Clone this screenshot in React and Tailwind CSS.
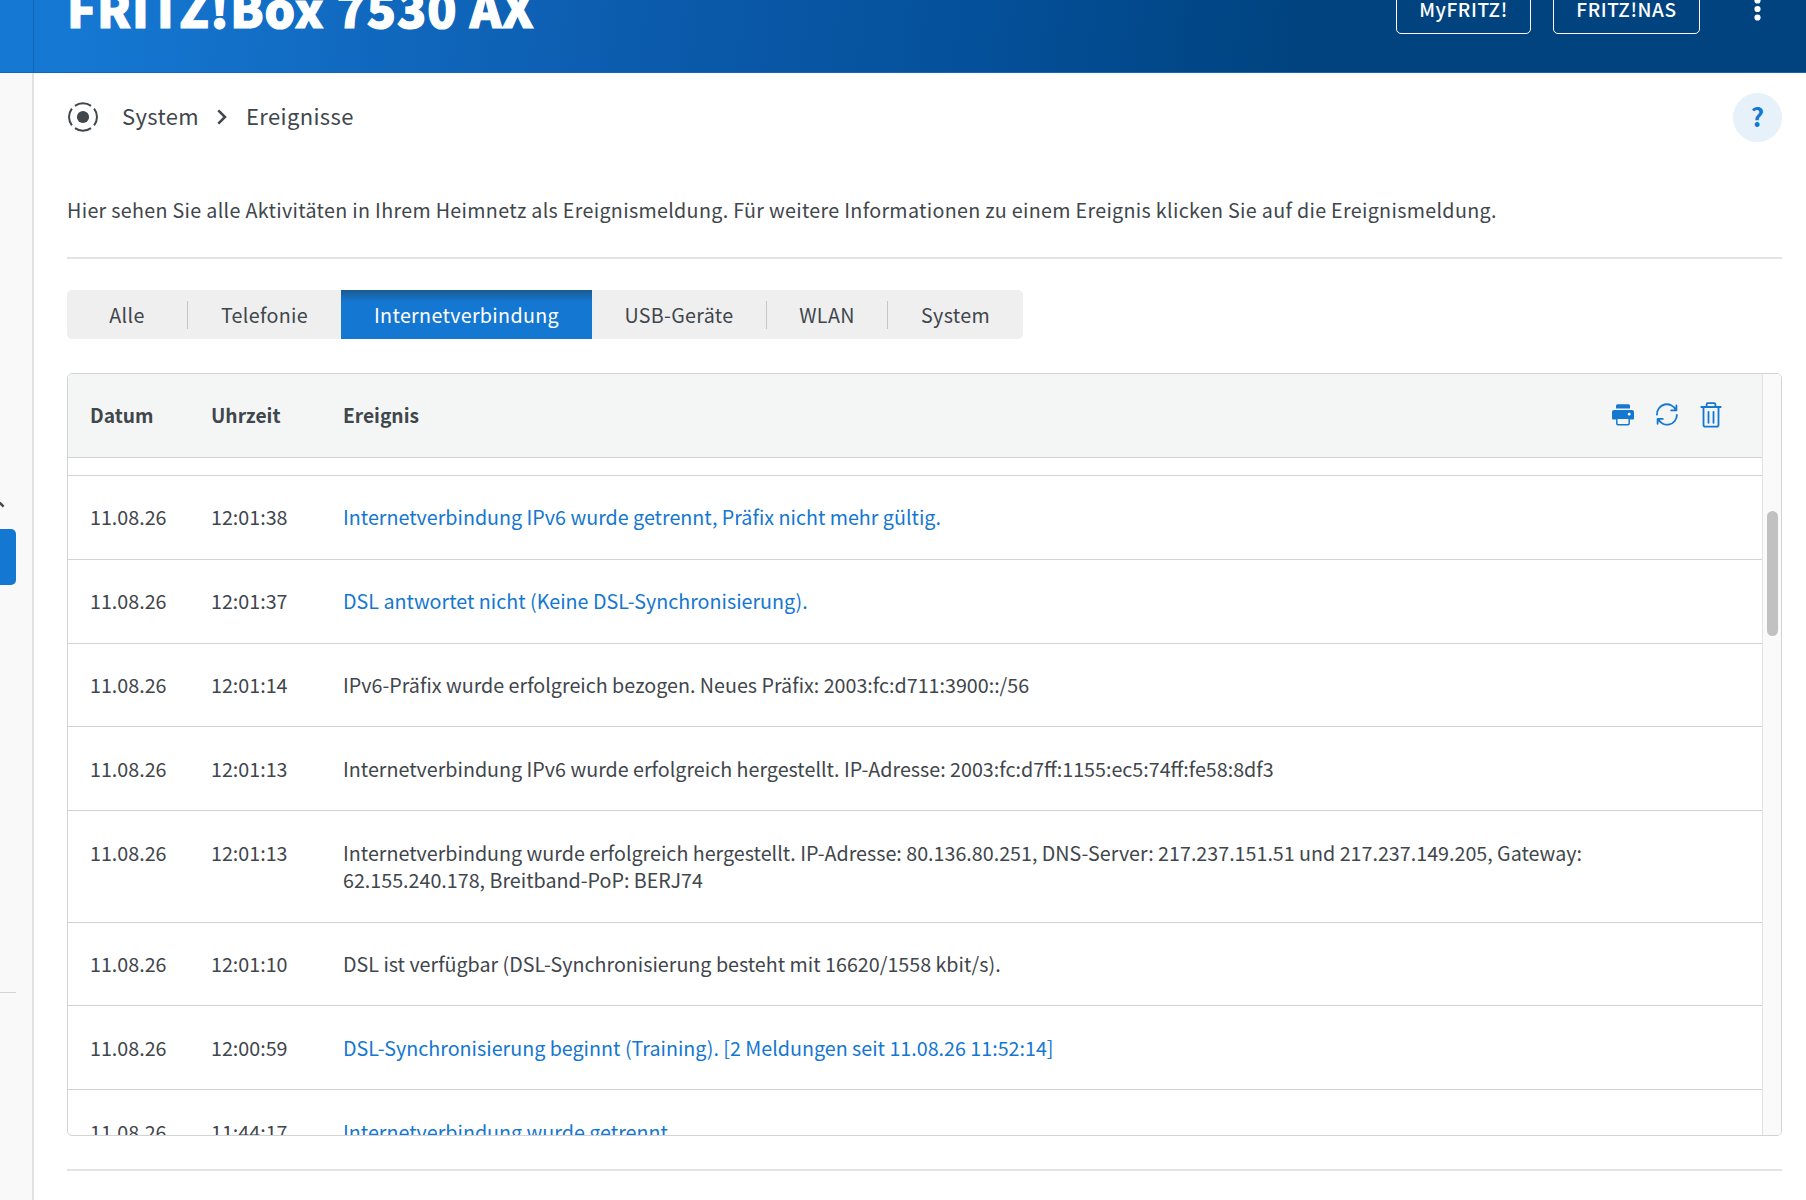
import React, { useState } from 'react';

const tabs = [
  { name: 'Alle', width: 'w-[121px]', divider: true },
  { name: 'Telefonie', width: 'w-[153px]' },
  { name: 'Internetverbindung', width: 'w-[251px]' },
  { name: 'USB-Geräte', width: 'w-[175px]', divider: true },
  { name: 'WLAN', width: 'w-[121px]', divider: true },
  { name: 'System', width: 'w-[135px]' },
];

const events = [
  { time: '12:01:38', text: 'Internetverbindung IPv6 wurde getrennt, Präfix nicht mehr gültig.', link: true },
  { time: '12:01:37', text: 'DSL antwortet nicht (Keine DSL-Synchronisierung).', link: true },
  { time: '12:01:14', text: 'IPv6-Präfix wurde erfolgreich bezogen. Neues Präfix: 2003:fc:d711:3900::/56' },
  { time: '12:01:13', text: 'Internetverbindung IPv6 wurde erfolgreich hergestellt. IP-Adresse: 2003:fc:d7ff:1155:ec5:74ff:fe58:8df3' },
  {
    time: '12:01:13',
    text: 'Internetverbindung wurde erfolgreich hergestellt. IP-Adresse: 80.136.80.251, DNS-Server: 217.237.151.51 und 217.237.149.205, Gateway: 62.155.240.178, Breitband-PoP: BERJ74',
  },
  { time: '12:01:10', text: 'DSL ist verfügbar (DSL-Synchronisierung besteht mit 16620/1558 kbit/s).' },
  { time: '12:00:59', text: 'DSL-Synchronisierung beginnt (Training). [2 Meldungen seit 11.08.26 11:52:14]', link: true },
  { time: '11:44:17', text: 'Internetverbindung wurde getrennt.', link: true },
];

function SystemIcon() {
  return (
    <svg className="h-[30px] w-[30px]" viewBox="0 0 30 30" fill="none" stroke="#3f464c" strokeWidth="2">
      <circle cx="15" cy="15" r="6.1" fill="#3f464c" stroke="none" />
      <path d="M7 3.9A13.7 13.7 0 0 1 23 3.9M26.1 6.6A13.7 13.7 0 0 1 26.1 23.4M23 26.1A13.7 13.7 0 0 1 7 26.1M3.9 23.4A13.7 13.7 0 0 1 3.9 6.6" />
    </svg>
  );
}

function PrintIcon() {
  return (
    <svg className="h-[26px] w-[24px]" viewBox="0 0 24 26">
      <path d="M5 6.5V3.8Q5 2.3 6.5 2.3H17.5Q19 2.3 19 3.8V6.5Z" fill="#1477d1" />
      <path d="M3 8H21Q23 8 23 10V16.5Q23 17.5 22 17.5H2Q1 17.5 1 16.5V10Q1 8 3 8Z" fill="#1477d1" />
      <path d="M5.8 16.3H18.2V21.6Q18.2 22.8 17 22.8H7Q5.8 22.8 5.8 21.6Z" fill="#f4f6f6" stroke="#1477d1" strokeWidth="1.5" />
      <circle cx="18.2" cy="12.2" r="1.4" fill="#fff" />
    </svg>
  );
}

function RefreshIcon() {
  return (
    <svg className="h-[26px] w-[24px]" viewBox="0 0 24 26" fill="none" stroke="#1477d1" strokeWidth="1.8" strokeLinecap="round" strokeLinejoin="round">
      <path d="M2 12.6A9.8 9.8 0 0 1 20.8 8.2M21.4 3.4V8.4H16.2" />
      <path d="M21.9 12.8A9.8 9.8 0 0 1 3.2 17M2.6 21.8V16.9H7.8" />
    </svg>
  );
}

function TrashIcon() {
  return (
    <svg className="h-[26px] w-[22px]" viewBox="0 0 22 26" fill="none" stroke="#1477d1" strokeWidth="1.8" strokeLinecap="round">
      <path d="M1.3 5H20.7M6.6 4.6V2.5Q6.6 1.2 7.9 1.2H14.1Q15.4 1.2 15.4 2.5V4.6" />
      <path d="M3.5 5.2V22.8Q3.5 24.7 5.2 24.7H16.8Q18.5 24.7 18.5 22.8V5.2M8.5 9.8V20.8M13.5 9.8V20.8" />
    </svg>
  );
}

function Header() {
  return (
    <header className="flex h-[73px] border-b border-[#1167b8] bg-[linear-gradient(97deg,#1578d3_0%,#1578d3_4%,#126dc4_16%,#0b5aab_37%,#04509a_54%,#00437f_72%)] text-white">
      <div className="w-[34px] shrink-0 border-r border-[#1468b4]" />
      <div className="flex flex-1 items-start justify-between pl-[33px]">
        <h1 className="-mt-[28px] text-[48px] leading-[70px] font-black tracking-[1.05px] whitespace-nowrap [-webkit-text-stroke:1.2px_white]">FRITZ!Box 7530 AX</h1>
        <div className="-mt-[14px] flex">
          <button className="h-[48px] w-[135px] rounded-[5px] border-[1.5px] border-white pb-[2px] text-[19px] font-medium tracking-[0.6px]">MyFRITZ!</button>
          <button className="ml-[22px] h-[48px] w-[147px] rounded-[5px] border-[1.5px] border-white pb-[2px] text-[19px] font-medium tracking-[0.6px]">FRITZ!NAS</button>
          <svg className="mt-[11px] mr-[45px] ml-[54px] h-[24px] w-[7px]" viewBox="0 0 7 24" fill="#fff">
            <circle cx="3.5" cy="3.5" r="3.1" />
            <circle cx="3.5" cy="12" r="3.1" />
            <circle cx="3.5" cy="20.5" r="3.1" />
          </svg>
        </div>
      </div>
    </header>
  );
}

function Sidebar() {
  return (
    <aside className="w-[34px] shrink-0 overflow-hidden border-r-2 border-[#e2e2e2] bg-[#f9f9f9] pt-[428px]">
      <svg className="block h-[8px] w-[6px]" viewBox="0 0 6 8" fill="none" stroke="#3f464c" strokeWidth="2.4">
        <path d="M-3 -1L3.6 5.6" />
      </svg>
      <div className="mt-[20px] h-[56px] w-[16px] rounded-r-[5px] bg-[#1477d1]" />
      <div className="mt-[407px] h-px w-[16px] bg-[#d2d4d4]" />
    </aside>
  );
}

function EventTable() {
  return (
    <section className="mt-[34px] flex h-[763px] overflow-hidden rounded-[5px] border border-[#d2d4d4]">
      <div className="flex min-w-0 flex-1 flex-col overflow-hidden">
        <div className="flex h-[84px] shrink-0 items-center border-b border-[#d2d4d4] bg-[#f4f6f6] pb-px pl-[22px] text-[19.2px] font-bold">
          <span className="w-[121px]">Datum</span>
          <span className="w-[132px]">Uhrzeit</span>
          <span className="flex-1">Ereignis</span>
          <div className="mr-[40px] flex items-center">
            <button aria-label="Drucken"><PrintIcon /></button>
            <button aria-label="Aktualisieren" className="mr-[21px] ml-[20px]"><RefreshIcon /></button>
            <button aria-label="Löschen"><TrashIcon /></button>
          </div>
        </div>
        <div className="h-[18px] shrink-0 border-b border-[#d2d4d4]" />
        {events.map((event, i) => (
          <div key={i} className="flex shrink-0 items-start border-b border-[#d2d4d4] pt-[27.45px] pb-[27.75px] pl-[22px] leading-[27.6px]">
            <span className="w-[121px] shrink-0">11.08.26</span>
            <span className="w-[132px] shrink-0">{event.time}</span>
            <span className={`w-[1260px] ${event.link ? 'text-[#1477d1]' : ''}`}>{event.text}</span>
          </div>
        ))}
      </div>
      <div className="w-[19px] shrink-0 border-l border-[#e2e2e2] bg-[#fafafa] pt-[137px] pl-[4px]">
        <div className="h-[125px] w-[11px] rounded-full bg-[#c1c1c1]" />
      </div>
    </section>
  );
}

function App() {
  const [active, setActive] = useState('Internetverbindung');

  return (
    <div className="flex h-[1200px] w-[1806px] flex-col overflow-hidden bg-white font-['Noto_Sans_CJK_SC','Open_Sans',sans-serif] text-[19.69px] text-[#3f464c]">
      <Header />
      <div className="flex min-h-0 flex-1">
        <Sidebar />
        <main className="min-w-0 flex-1 pr-[24px] pl-[33px]">
          <div className="flex h-[88px] items-center">
            <div className="pl-px"><SystemIcon /></div>
            <span className="ml-[24px] pb-[3px] text-[22px] tracking-[0.35px]">System</span>
            <svg className="mr-[19px] ml-[18px] h-[16px] w-[10px]" viewBox="0 0 10 16" fill="none" stroke="#3f464c" strokeWidth="2.5">
              <path d="M1.3 1.3L8 8L1.3 14.7" />
            </svg>
            <span className="pb-[3px] text-[22px] tracking-[0.35px]">Ereignisse</span>
            <button className="ml-auto h-[49px] w-[49px] rounded-full bg-[#e6f1fa] pb-[4px] text-[26px] font-bold text-[#1477d1]">?</button>
          </div>
          <p className="mt-[34px] leading-[30px] tracking-[0.315px] whitespace-nowrap">
            Hier sehen Sie alle Aktivitäten in Ihrem Heimnetz als Ereignismeldung. Für weitere Informationen zu einem Ereignis klicken Sie auf die Ereignismeldung.
          </p>
          <hr className="mt-[32px] border-t-2 border-[#e3e3e3]" />
          <div className="mt-[31px] flex h-[49px] w-[956px] items-center overflow-hidden rounded-[5px] bg-[#efefef]">
            {tabs.map((tab) => (
              <button
                key={tab.name}
                onClick={() => setActive(tab.name)}
                className={`flex h-full items-center tracking-[0.32px] ${tab.width} ${
                  active === tab.name ? 'bg-[linear-gradient(#1b5a94_0px,#1477d1_12px)] text-white' : ''
                }`}
              >
                <span className="flex-1 text-center">{tab.name}</span>
                {tab.divider && <span className="h-[28px] w-px bg-[#c4c6c7]" />}
              </button>
            ))}
          </div>
          <EventTable />
          <hr className="mt-[33px] border-t-2 border-[#e3e3e3]" />
        </main>
      </div>
    </div>
  );
}

export default App;
